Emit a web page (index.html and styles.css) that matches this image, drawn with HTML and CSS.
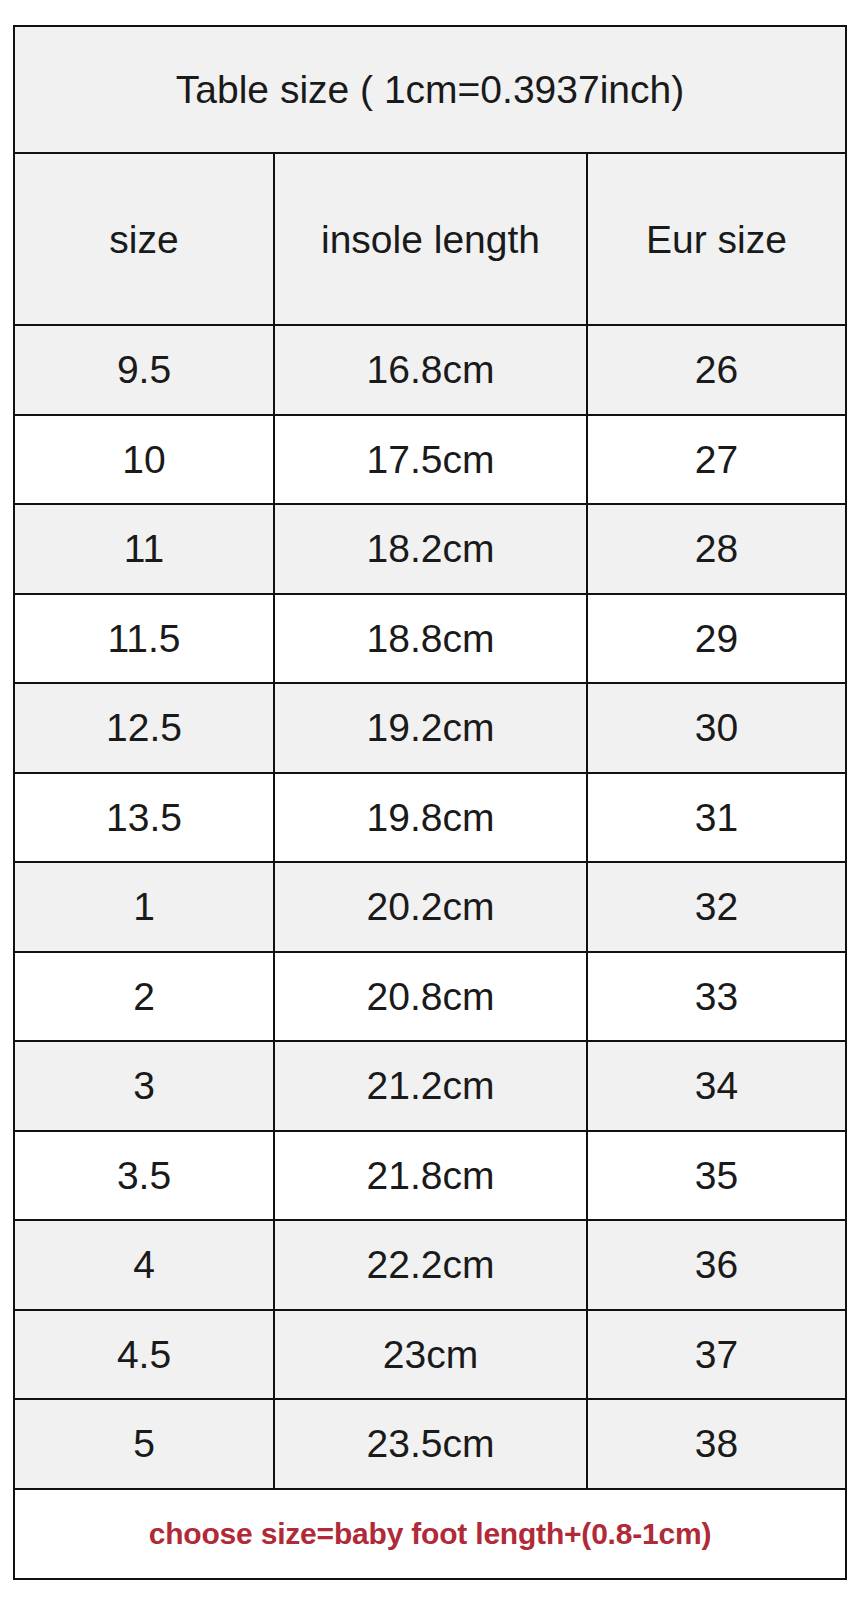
FILE: index.html
```html
<!DOCTYPE html>
<html>
<head>
<meta charset="utf-8">
<link rel="stylesheet" href="styles.css">
</head>
<body>
<table class="size-table">
  <colgroup>
    <col class="c1"><col class="c2"><col class="c3">
  </colgroup>
  <tr class="title-row gray"><td colspan="3">Table size ( 1cm=0.3937inch)</td></tr>
  <tr class="head-row gray"><td>size</td><td>insole length</td><td>Eur size</td></tr>
  <tr class="data gray"><td>9.5</td><td>16.8cm</td><td>26</td></tr>
  <tr class="data"><td>10</td><td>17.5cm</td><td>27</td></tr>
  <tr class="data gray"><td>11</td><td>18.2cm</td><td>28</td></tr>
  <tr class="data"><td>11.5</td><td>18.8cm</td><td>29</td></tr>
  <tr class="data gray"><td>12.5</td><td>19.2cm</td><td>30</td></tr>
  <tr class="data"><td>13.5</td><td>19.8cm</td><td>31</td></tr>
  <tr class="data gray"><td>1</td><td>20.2cm</td><td>32</td></tr>
  <tr class="data"><td>2</td><td>20.8cm</td><td>33</td></tr>
  <tr class="data gray"><td>3</td><td>21.2cm</td><td>34</td></tr>
  <tr class="data"><td>3.5</td><td>21.8cm</td><td>35</td></tr>
  <tr class="data gray"><td>4</td><td>22.2cm</td><td>36</td></tr>
  <tr class="data gray"><td>4.5</td><td>23cm</td><td>37</td></tr>
  <tr class="data gray"><td>5</td><td>23.5cm</td><td>38</td></tr>
  <tr class="foot-row"><td colspan="3">choose size=baby foot length+(0.8-1cm)</td></tr>
</table>
</body>
</html>
```
FILE: styles.css
```css
html, body {
  margin: 0;
  padding: 0;
  background: #ffffff;
}
body {
  padding: 25px 0 0 13px;
  font-family: "Liberation Sans", Arial, sans-serif;
  color: #1a1a1a;
}
.size-table {
  border-collapse: collapse;
  table-layout: fixed;
  width: 832px;
  border: 2px solid #111;
}
.c1 { width: 260px; }
.c2 { width: 313px; }
.c3 { width: 259px; }
.size-table td {
  border: 2px solid #111;
  padding: 0;
  text-align: center;
  vertical-align: middle;
  font-size: 39px;
  line-height: 1;
}
.gray td { background: #f1f1f1; }
.title-row { height: 127px; }
.head-row { height: 172px; }
.data { height: 89.5px; }
.foot-row { height: 90px; }
.foot-row td {
  background: #ffffff;
  color: #b02a38;
  font-weight: bold;
  font-size: 30px;
  letter-spacing: -0.2px;
}
```
